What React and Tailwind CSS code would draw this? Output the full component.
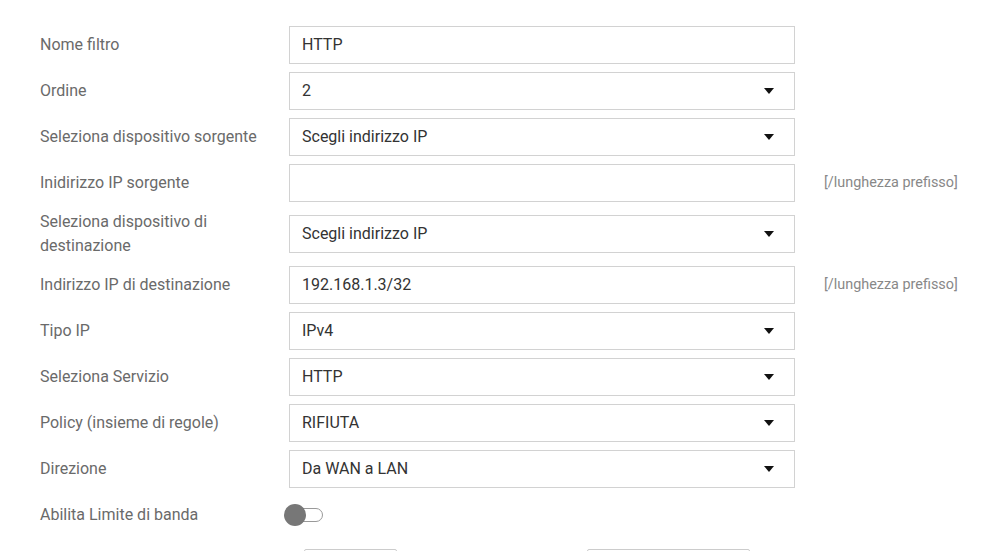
import { useState } from "react";

const rows = [
  { label: "Nome filtro", value: "HTTP", type: "input" },
  { label: "Ordine", value: "2", type: "select" },
  { label: "Seleziona dispositivo sorgente", value: "Scegli indirizzo IP", type: "select" },
  { label: "Inidirizzo IP sorgente", value: "", type: "input", hint: "[/lunghezza prefisso]" },
  { label: "Seleziona dispositivo di destinazione", value: "Scegli indirizzo IP", type: "select" },
  { label: "Indirizzo IP di destinazione", value: "192.168.1.3/32", type: "input", hint: "[/lunghezza prefisso]" },
  { label: "Tipo IP", value: "IPv4", type: "select" },
  { label: "Seleziona Servizio", value: "HTTP", type: "select" },
  { label: "Policy (insieme di regole)", value: "RIFIUTA", type: "select" },
  { label: "Direzione", value: "Da WAN a LAN", type: "select" },
];

const Caret = () => (
  <svg width="10" height="6" viewBox="0 0 10 6" className="shrink-0">
    <path d="M0 0 H10 L5 6 Z" fill="#111" />
  </svg>
);

const Field = ({ row }) => (
  <div className="flex min-h-[38px] items-center">
    {/* label */}
    <div className="w-[249px] shrink-0 pr-[20px] text-[16px] leading-[24px] text-[#6a6a6a]">
      {row.label}
    </div>

    {/* control */}
    <div className="flex h-[38px] w-[506px] shrink-0 items-center justify-between border border-[#d2d2d2] bg-white pl-[12px] pr-[20px] text-[16px] text-[#333]">
      <span>{row.value}</span>
      {row.type === "select" && <Caret />}
    </div>

    {/* hint */}
    {row.hint && (
      <div className="ml-[29px] text-[14.4px] text-[#888]">{row.hint}</div>
    )}
  </div>
);

export default function App() {
  const [enabled, setEnabled] = useState(false);

  return (
    <div
      className="min-h-screen bg-white pl-[40px] pt-[26px]"
      style={{ fontFamily: "Roboto, 'Liberation Sans', sans-serif" }}
    >
      <div className="flex flex-col gap-[8px]">
        {rows.map((row) => (
          <Field key={row.label} row={row} />
        ))}

        {/* bandwidth toggle */}
        <div className="flex h-[38px] items-center">
          <div className="w-[249px] shrink-0 text-[16px] leading-[24px] text-[#6a6a6a]">
            Abilita Limite di banda
          </div>
          <button
            type="button"
            onClick={() => setEnabled(!enabled)}
            className="relative -ml-[5px] h-[22px] w-[39px]"
          >
            <span className="absolute left-[5px] top-[4px] h-[14px] w-[34px] rounded-full border border-[#999] bg-white" />
            <span
              className={
                "absolute top-0 h-[22px] w-[22px] rounded-full bg-[#777] " +
                (enabled ? "left-[17px]" : "left-0")
              }
            />
          </button>
        </div>
      </div>

      {/* buttons (only their top edge is in view) */}
      <div className="mt-[15px] flex">
        <button
          aria-label="Annulla"
          className="ml-[264px] h-[40px] w-[93px] rounded-[2px] border border-[#ccc] bg-white"
        />
        <button
          aria-label="Salva"
          className="ml-[190px] h-[40px] w-[163px] rounded-[2px] border border-[#ccc] bg-white"
        />
      </div>
    </div>
  );
}
